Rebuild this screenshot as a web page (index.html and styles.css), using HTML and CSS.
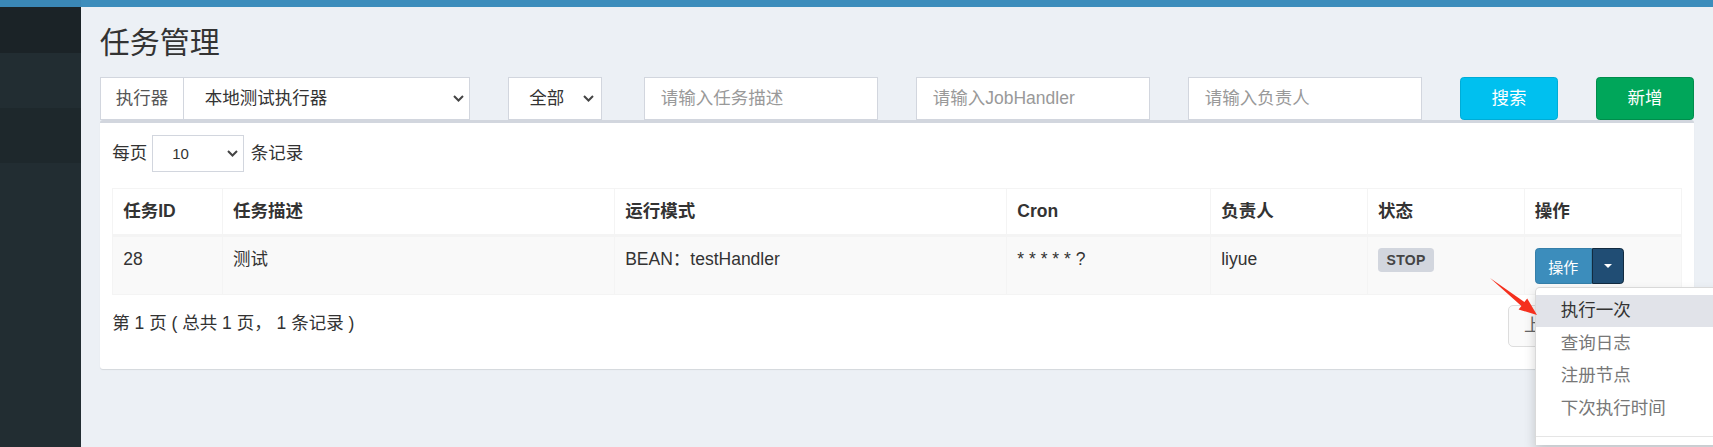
FILE: index.html
```html
<!DOCTYPE html>
<html lang="zh-CN">
<head>
<meta charset="utf-8">
<title>任务管理</title>
<link rel="stylesheet" href="styles.css">
</head>
<body>
<aside class="sidebar">
  <div class="sb-top"></div>
  <div class="sb-band sb-dark"></div>
  <div class="sb-band sb-mid"></div>
  <div class="sb-band sb-alt"></div>
  <div class="sb-rest"></div>
</aside>
<div class="main">
  <div class="topbar"></div>
  <section class="content-header"><h1>任务管理</h1></section>
  <section class="content">
    <div class="filters">
      <div class="input-group">
        <span class="addon">执行器</span>
        <div class="select group-select"><span>本地测试执行器</span><svg class="chev" width="11" height="7" viewBox="0 0 11 7"><polyline points="1,1 5.5,5.5 10,1"/></svg></div>
      </div>
      <div class="cell1"><div class="select status-select"><span>全部</span><svg class="chev" width="11" height="7" viewBox="0 0 11 7"><polyline points="1,1 5.5,5.5 10,1"/></svg></div></div>
      <input class="input" type="text" placeholder="请输入任务描述">
      <input class="input" type="text" placeholder="请输入JobHandler">
      <input class="input" type="text" placeholder="请输入负责人">
      <button class="btn btn-info" type="button">搜索</button>
      <button class="btn btn-success" type="button">新增</button>
    </div>

    <div class="box">
      <div class="length">
        <span>每页</span>
        <div class="select select-sm"><span>10</span><svg class="chev" width="11" height="7" viewBox="0 0 11 7"><polyline points="1,1 5.5,5.5 10,1"/></svg></div>
        <span class="after">条记录</span>
      </div>

      <table class="grid">
        <colgroup>
          <col class="w7"><col class="w25"><col class="w25"><col class="w13"><col class="w10"><col class="w10"><col class="w10">
        </colgroup>
        <thead>
          <tr><th>任务ID</th><th>任务描述</th><th>运行模式</th><th>Cron</th><th>负责人</th><th>状态</th><th>操作</th></tr>
        </thead>
        <tbody>
          <tr>
            <td>28</td>
            <td>测试</td>
            <td>BEAN：testHandler</td>
            <td>* * * * * ?</td>
            <td>liyue</td>
            <td><span class="label">STOP</span></td>
            <td>
              <div class="btn-group">
                <button class="btn-op" type="button">操作</button>
                <button class="btn-toggle" type="button"><span class="caret"></span></button>
                <ul class="dropdown-menu">
                  <li class="active"><a>执行一次</a></li>
                  <li><a>查询日志</a></li>
                  <li><a>注册节点</a></li>
                  <li><a>下次执行时间</a></li>
                  <li class="divider"></li>
                </ul>
              </div>
            </td>
          </tr>
        </tbody>
      </table>

      <div class="footer-row">
        <div class="info">第 1 页 ( 总共 1 页， 1 条记录 )</div>
        <ul class="pagination">
          <li class="disabled"><a>上页</a></li>
          <li class="current"><a>1</a></li>
          <li class="disabled"><a>下页</a></li>
        </ul>
      </div>
    </div>
  </section>
</div>
<svg class="annot-arrow" width="60" height="50" viewBox="0 0 60 50">
  <polygon points="5,5 39.4,28.9 42.2,25.4 52,42 33.6,36.4 36.4,32.9"/>
</svg>
</body>
</html>
```
FILE: styles.css
```css
html, body {
  margin: 0;
  padding: 0;
  overflow: hidden;
}
body {
  display: flex;
  height: 447px;
  background: #ecf0f5;
  font-family: "Liberation Sans", "Noto Sans CJK SC", sans-serif;
  font-size: 17.5px;
  line-height: 25px;
  color: #333;
  position: relative;
}

/* sidebar */
.sidebar {
  flex: 0 0 81px;
  display: flex;
  flex-direction: column;
  background: #222d32;
}
.sb-top { height: 7px; background: #3a87b6; }
.sb-band { height: 55px; }
.sb-dark { height: 46px; background: #1b2327; }
.sb-mid { background: #222d32; }
.sb-alt { background: #1e282c; }
.sb-rest { flex: 1; background: #222d32; }

/* main */
.main {
  flex: 1;
  min-width: 0;
}
.topbar { height: 7px; background: #3c8dbc; }
.content-header { padding: 18.75px 18.75px 0; }
.content-header h1 {
  margin: 0;
  font-size: 30px;
  line-height: 33px;
  font-weight: 400;
  color: #333;
}
.content { padding: 18.5px 18.75px 0; }

/* filters */
.filters {
  display: grid;
  grid-template-columns: repeat(12, minmax(0, 1fr));
  column-gap: 37.5px;
  height: 42.5px;
}
.input-group {
  grid-column: span 3;
  display: flex;
  border: 1px solid #d2d6de;
  background: #fff;
}
.addon {
  display: flex;
  align-items: center;
  padding: 0 15px;
  border-right: 1px solid #d2d6de;
  color: #555;
}
.select {
  display: flex;
  align-items: center;
  justify-content: space-between;
  background: #fff;
  color: #333;
  box-sizing: border-box;
}
.chev {
  flex: 0 0 auto;
  fill: none;
  stroke: #444;
  stroke-width: 2;
}
.group-select {
  flex: 1;
  padding: 0 5px 0 20.5px;
}
.cell1 { grid-column: span 1; }
.status-select {
  width: 94px;
  height: 100%;
  border: 1px solid #d2d6de;
  padding: 0 7px 0 20.5px;
}
.input {
  grid-column: span 2;
  height: 42.5px;
  box-sizing: border-box;
  border: 1px solid #d2d6de;
  padding: 0 16px;
  font: inherit;
  color: #555;
  background: #fff;
  outline: none;
  min-width: 0;
}
.input::placeholder { color: #999; }
.btn {
  grid-column: span 1;
  height: 42.5px;
  border-radius: 3.75px;
  border: 1px solid transparent;
  color: #fff;
  font: inherit;
  padding: 0;
}
.btn-info { background: #00c0ef; border-color: #00acd6; }
.btn-success { background: #00a65a; border-color: #008d4c; }

/* box */
.box {
  background: #fff;
  border-top: 3px solid #d2d6de;
  border-radius: 3px;
  box-shadow: 0 1px 1px rgba(0, 0, 0, 0.1);
  padding: 12.5px;
}
.length {
  display: flex;
  align-items: center;
  height: 37px;
}
.select-sm {
  width: 92px;
  height: 37px;
  margin-left: 5px;
  border: 1px solid #d2d6de;
  padding: 0 5px 0 19px;
  font-size: 15px;
}
.length .after { margin-left: 6.5px; }

/* table */
.grid {
  width: 100%;
  margin-top: 15.5px;
  border-collapse: collapse;
  table-layout: fixed;
  border: 1px solid #f4f4f4;
}
.w7 { width: 7%; }
.w25 { width: 25%; }
.w13 { width: 13%; }
.w10 { width: 10%; }
.grid th {
  text-align: left;
  font-weight: 700;
  padding: 10.5px 10px 10px;
  border: 1px solid #f4f4f4;
  border-bottom: 3px solid #f4f4f4;
  color: #333;
}
.grid td {
  padding: 10px;
  vertical-align: top;
  border: 1px solid #f4f4f4;
  background: #f9f9f9;
}
.label {
  display: inline-block;
  vertical-align: top;
  margin-top: 1px;
  height: 24px;
  line-height: 24px;
  padding: 0 8.5px;
  border-radius: 3.75px;
  background: #d2d6de;
  color: #444;
  font-size: 14px;
  font-weight: 700;
  letter-spacing: 0.3px;
}
.btn-group {
  position: relative;
  display: inline-flex;
  vertical-align: top;
  margin-top: 1px;
}
.btn-op {
  height: 36px;
  padding: 0 12.5px;
  background: #3c8dbc;
  border: 1px solid #367fa9;
  border-radius: 3.75px 0 0 3.75px;
  color: #fff;
  font-family: inherit;
  font-size: 15px;
}
.btn-toggle {
  width: 32px;
  height: 36px;
  padding: 0;
  background: #204d74;
  border: 1px solid #122b40;
  border-radius: 0 3.75px 3.75px 0;
  display: flex;
  align-items: center;
  justify-content: center;
}
.caret {
  width: 0;
  height: 0;
  border-top: 4.5px solid #fff;
  border-left: 4.5px solid transparent;
  border-right: 4.5px solid transparent;
}
.dropdown-menu {
  position: absolute;
  top: calc(100% + 3px);
  left: 0;
  z-index: 20;
  min-width: 200px;
  margin: 0;
  padding: 6.25px 0 0;
  list-style: none;
  background: #fff;
  border: 1px solid rgba(0, 0, 0, 0.15);
  border-bottom: 0;
  border-radius: 5px 5px 0 0;
  box-shadow: 0 6px 12px rgba(0, 0, 0, 0.175);
}
.dropdown-menu a {
  display: block;
  padding: 3.75px 25px;
  line-height: 25px;
  color: #777;
  white-space: nowrap;
}
.dropdown-menu .active a {
  background: #e1e3e9;
  color: #333;
}
.dropdown-menu .divider {
  height: 1px;
  margin: 11.25px 0 8px;
  background: #e5e5e5;
}

/* footer */
.footer-row {
  display: flex;
  justify-content: space-between;
  align-items: flex-start;
  margin: 9.5px 0;
}
.info { padding-top: 6.5px; color: #333; }
.pagination {
  display: flex;
  margin: 0;
  padding: 0;
  list-style: none;
}
.pagination li + li { margin-left: -1px; }
.pagination a {
  display: block;
  padding: 7.5px 15px;
  line-height: 25px;
  border: 1px solid #ddd;
  background: #fafafa;
  color: #666;
}
.pagination li:first-child a { border-radius: 5px 0 0 5px; }
.pagination li:last-child a { border-radius: 0 5px 5px 0; }
.pagination .current a { background: #3c8dbc; border-color: #367fa9; color: #fff; }

/* annotation arrow */
.annot-arrow {
  position: absolute;
  left: 1485px;
  top: 273px;
  z-index: 50;
  pointer-events: none;
  fill: #f5301e;
}
```
